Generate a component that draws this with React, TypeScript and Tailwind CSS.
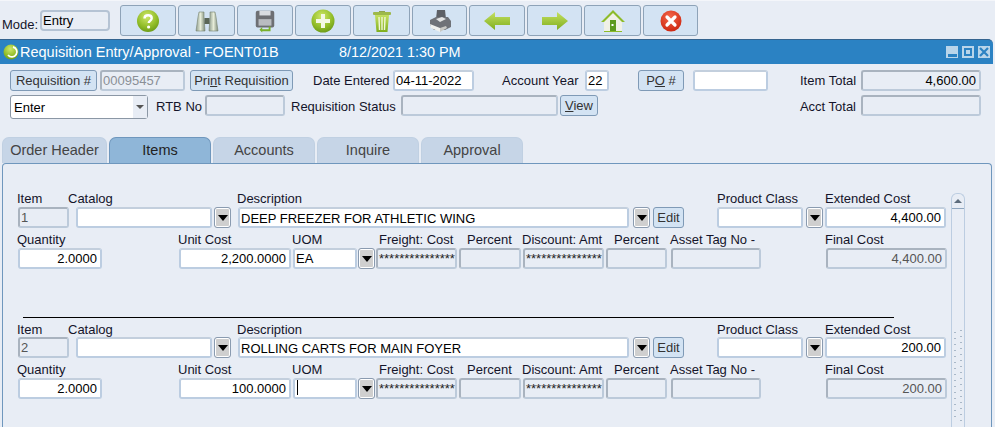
import type { ReactNode } from "react";

const well = "h-[21px] shrink-0 rounded-[3px] border-2 pl-[1px] pr-[3px] text-[13px] leading-[17px] whitespace-pre overflow-hidden";
const whiteWell = `${well} border-[#bccde1] border-t-[#c3cfdd] bg-white text-black`;
const greyWell = `${well} border-[#bccada] border-t-[#a9b3bf] border-l-[#a9b3bf] bg-[#e8edf5] text-[#555]`;

function Input({ className = "", children }: { className?: string; children?: ReactNode }) {
  return <div className={`${whiteWell} ${className}`}>{children}</div>;
}

function Display({ className = "", children }: { className?: string; children?: ReactNode }) {
  return <div className={`${greyWell} ${className}`}>{children}</div>;
}

function Lov({ className = "" }: { className?: string }) {
  return (
    <div className={`flex h-[21px] w-[17px] shrink-0 items-center justify-center rounded-[3px] border border-[#8a9bb0] bg-[#cfcfcf] shadow-[inset_0_0_0_1px_#fff] ${className}`}>
      <div className="h-0 w-0 border-x-[5px] border-t-[6px] border-x-transparent border-t-black" />
    </div>
  );
}

function Btn({ className = "", children }: { className?: string; children: ReactNode }) {
  return (
    <div className={`flex h-[21px] shrink-0 items-center justify-center whitespace-pre rounded-[3px] border border-[#7f9ab6] bg-[#d3e3f3] text-[13px] text-[#333] ${className}`}>
      {children}
    </div>
  );
}

function Label({ className = "", children }: { className?: string; children: ReactNode }) {
  return <div className={`shrink-0 text-[13px] leading-[16px] whitespace-pre text-[#14142a] ${className}`}>{children}</div>;
}

function ToolButton({ className = "", children }: { className?: string; children: ReactNode }) {
  return (
    <div className={`flex h-[31px] shrink-0 items-center justify-center rounded-[3px] border border-[#8ea3b8] bg-[#d3e3f3] ${className}`}>
      {children}
    </div>
  );
}

const IconDefs = () => (
  <svg width="0" height="0" className="absolute">
    <defs>
      <radialGradient id="green" cx="0.45" cy="0.3" r="0.8">
        <stop offset="0" stopColor="#cfe86a" />
        <stop offset="0.6" stopColor="#8fbb26" />
        <stop offset="1" stopColor="#5f8f14" />
      </radialGradient>
      <radialGradient id="red" cx="0.45" cy="0.3" r="0.8">
        <stop offset="0" stopColor="#f4674a" />
        <stop offset="1" stopColor="#c81f0a" />
      </radialGradient>
      <linearGradient id="arrow" x1="0" y1="0" x2="0" y2="1">
        <stop offset="0" stopColor="#c4e060" />
        <stop offset="1" stopColor="#7fae1e" />
      </linearGradient>
      <linearGradient id="steel" x1="0" y1="0" x2="1" y2="0">
        <stop offset="0" stopColor="#8c9a8c" />
        <stop offset="0.5" stopColor="#e6ecd8" />
        <stop offset="1" stopColor="#7d8a7a" />
      </linearGradient>
    </defs>
  </svg>
);

const HelpIcon = () => (
  <svg width="24" height="24" viewBox="0 0 24 24">
    <circle cx="12" cy="12" r="11" fill="url(#green)" />
    <path d="M8.500 9.500c0-2 1.600-3.200 3.600-3.200s3.600 1.200 3.600 3c0 2.600-3 2.600-3 4.800" fill="none" stroke="#fff" strokeWidth="2.400" />
    <circle cx="12.600" cy="18" r="1.600" fill="#fff" />
  </svg>
);

const BinocularsIcon = () => (
  <svg width="24" height="24" viewBox="0 0 24 24">
    <path d="M4 3h5v5l1 14H1L3 8z" fill="url(#steel)" stroke="#77836f" strokeWidth="0.600" />
    <path d="M15 3h5l1 5 2 14h-9l1-14z" fill="url(#steel)" stroke="#77836f" strokeWidth="0.600" />
    <rect x="9.500" y="9" width="5" height="6" fill="#5a6657" />
  </svg>
);

const SaveIcon = () => (
  <svg width="24" height="24" viewBox="0 0 26 26">
    <rect x="3" y="2" width="20" height="18" rx="2" fill="#6d6f73" />
    <rect x="7" y="2" width="12" height="5" fill="#d9dce0" />
    <rect x="6" y="11" width="14" height="7" fill="#b9bcc0" />
    <path d="M17 19v3h-7v-2.500l-3 3 3 3V24h9v-5z" fill="#79b02a" />
  </svg>
);

const PlusIcon = () => (
  <svg width="24" height="24" viewBox="0 0 24 24">
    <circle cx="12" cy="12" r="11.500" fill="url(#green)" />
    <path d="M10 5h4v5h5v4h-5v5h-4v-5H5v-4h5z" fill="#f3f8e4" />
  </svg>
);

const TrashIcon = () => (
  <svg width="20" height="24" viewBox="0 0 20 24">
    <path d="M7 2h6v2H7z" fill="#8fa34f" />
    <rect x="1" y="3" width="18" height="3" rx="1" fill="#9db84a" />
    <path d="M3 6h14l-1.500 17h-11z" fill="url(#arrow)" />
    <path d="M7 8l.5 13M10 8v13M13 8l-.5 13" stroke="#f1f6d8" strokeWidth="1.400" />
  </svg>
);

const PrinterIcon = () => (
  <svg width="24" height="24" viewBox="0 0 24 24">
    <path d="M9 1h8l1 9H8z" fill="#5d6066" />
    <path d="M2 11l6-3h12l3 4v6l-6 3H6L2 16z" fill="#6f7278" />
    <path d="M2 15l10 4v4L3 19z" fill="#f1f1ee" />
    <path d="M12 19l6-2 1 2-7 4z" fill="#c9c9c5" />
    <path d="M8 10l6-2 4 2-6 3z" fill="#e3e4e4" />
  </svg>
);

const ArrowIcon = ({ flip = false }: { flip?: boolean }) => (
  <svg width="28" height="20" viewBox="0 0 28 20" className={flip ? "-scale-x-100" : ""}>
    <path d="M1 10L12 1v5h15v8H12v5z" fill="url(#arrow)" />
  </svg>
);

const HomeIcon = () => (
  <svg width="26" height="24" viewBox="0 0 26 24">
    <path d="M13 1L1 13h3v10h18V13h3z" fill="#8dbb2a" />
    <path d="M13 4L4 13v9h18v-9z" fill="#f0f1e6" />
    <rect x="10" y="11" width="6" height="11" fill="#5d9a1e" />
    <rect x="11.500" y="15" width="2" height="2" fill="#fff" />
  </svg>
);

const CloseIcon = () => (
  <svg width="22" height="22" viewBox="0 0 22 22">
    <circle cx="11" cy="11" r="10.500" fill="url(#red)" />
    <path d="M7 7l8 8M15 7l-8 8" stroke="#fff" strokeWidth="3.200" strokeLinecap="round" />
  </svg>
);

function Toolbar() {
  return (
    <div className="flex h-[38px] items-start bg-[#e8edf5]">
      <Label className="ml-[2px] mt-[16px] w-[38px]">Mode:</Label>
      <Display className="mt-[9px] w-[70px] !rounded-[4px] !border-[#b5c3d4] !text-black">Entry</Display>
      <div className="ml-[10px] mt-[4px] flex gap-[2px]">
        <ToolButton className="w-[56px]"><HelpIcon /></ToolButton>
        <ToolButton className="w-[57px]"><BinocularsIcon /></ToolButton>
        <ToolButton className="w-[56px]"><SaveIcon /></ToolButton>
        <ToolButton className="w-[56px]"><PlusIcon /></ToolButton>
        <ToolButton className="w-[57px]"><TrashIcon /></ToolButton>
        <ToolButton className="w-[55px]"><PrinterIcon /></ToolButton>
        <ToolButton className="w-[56px]"><ArrowIcon /></ToolButton>
        <ToolButton className="w-[55px]"><ArrowIcon flip /></ToolButton>
        <ToolButton className="w-[57px]"><HomeIcon /></ToolButton>
        <ToolButton className="w-[55px]"><CloseIcon /></ToolButton>
      </div>
    </div>
  );
}

function TitleBar() {
  return (
    <div className="flex h-[25px] w-[993px] items-center rounded-tr-[5px] border-t border-[#35648f] bg-[#2b82c3] text-white">
      <svg width="18" height="18" viewBox="0 0 18 18" className="ml-[2px]">
        <circle cx="9" cy="9" r="7.500" fill="url(#green)" />
        <path d="M11 4a5 5 0 1 1-5 8" fill="none" stroke="#fff" strokeWidth="1.800" />
      </svg>
      <span className="w-[319px] text-[14.500px] leading-none">Requisition Entry/Approval - FOENT01B</span>
      <span className="text-[14.400px] leading-none">8/12/2021 1:30 PM</span>
      <div className="ml-auto mr-[3px] flex gap-[4px]">
        <div className="flex h-[12px] w-[12px] items-end justify-center bg-[#b9d5ea] pb-[1px]">
          <div className="h-[3px] w-[9px] bg-[#2b82c3]" />
        </div>
        <div className="flex h-[12px] w-[12px] items-center justify-center bg-[#b9d5ea]">
          <div className="h-[8px] w-[8px] border-2 border-[#2b82c3]" />
        </div>
        <div className="flex h-[12px] w-[12px] items-center justify-center bg-[#b9d5ea]">
          <svg width="10" height="10" viewBox="0 0 10 10">
            <path d="M1 1l8 8M9 1l-8 8" stroke="#2b82c3" strokeWidth="2.200" />
          </svg>
        </div>
      </div>
    </div>
  );
}

function HeaderForm() {
  return (
    <div className="h-[73px] pt-[6px]">
      <div className="flex items-center">
        <Btn className="ml-[10px] w-[87px]">Requisition #</Btn>
        <Display className="ml-[3px] w-[85px] !text-[#8a8f96]">00095457</Display>
        <Btn className="ml-[5px] w-[103px]"><span>Pri<u>n</u>t Requisition</span></Btn>
        <Label className="ml-[20px] w-[80px]">Date Entered</Label>
        <Input className="w-[81px]">04-11-2022</Input>
        <Label className="ml-[28px] w-[83px]">Account Year</Label>
        <Input className="w-[24px]">22</Input>
        <Btn className="ml-[29px] w-[46px]"><span>P<u>O</u> #</span></Btn>
        <Input className="ml-[9px] w-[75px]" />
        <Label className="ml-[32px] w-[56px] text-right">Item Total</Label>
        <Display className="ml-[5px] w-[120px] text-right !text-black">4,600.00</Display>
      </div>
      <div className="mt-[4px] flex items-start">
        <div className="ml-[10px] flex h-[24px] w-[138px] shrink-0 rounded-[3px] border border-[#8b97a5] bg-white">
          <div className="flex-1 pl-[3px] text-[13px] leading-[23px] text-black">Enter</div>
          <div className="flex w-[14px] items-center justify-center bg-[#e8edf5]">
            <div className="h-0 w-0 border-x-[4px] border-t-[4px] border-x-transparent border-t-[#555]" />
          </div>
        </div>
        <Label className="ml-[8px] mt-[4px] w-[49px]">RTB No</Label>
        <Display className="w-[80px]" />
        <Label className="ml-[6px] mt-[4px] w-[110px]">Requisition Status</Label>
        <Display className="w-[157px]" />
        <Btn className="ml-[2px] w-[38px]"><span><u>V</u>iew</span></Btn>
        <Label className="ml-[200px] mt-[4px] w-[58px] text-right">Acct Total</Label>
        <Display className="ml-[5px] w-[120px]" />
      </div>
    </div>
  );
}

function Tabs() {
  const tab = "flex h-[26px] w-[102px] shrink-0 items-center justify-center rounded-t-[7px] border-t border-x border-[#c0d0e2] bg-[#c6d5e7] text-[14.500px] text-[#444]";
  return (
    <div className="flex h-[26px] gap-[2px] pl-[2px]">
      <div className={`${tab} !w-[105px]`}>Order Header</div>
      <div className={`${tab} !border-[#6f97bd] !bg-[#8fb6d8] !text-[#222]`}>Items</div>
      <div className={tab}>Accounts</div>
      <div className={tab}>Inquire</div>
      <div className={tab}>Approval</div>
    </div>
  );
}

function ItemBlock({ no, desc, unit, uom, extended, topRow }: { no: string; desc: string; unit: string; uom: string; extended: string; topRow: string }) {
  return (
    <div>
      <div className={`flex ${topRow}`}>
        <Label className="ml-[14px] w-[51px]">Item</Label>
        <Label className="w-[169px]">Catalog</Label>
        <Label className="w-[480px]">Description</Label>
        <Label className="w-[108px]">Product Class</Label>
        <Label>Extended Cost</Label>
      </div>
      <div className="flex">
        <Display className="ml-[15px] w-[51px]">{no}</Display>
        <Input className="ml-[7px] w-[136px]" />
        <Lov className="ml-[2px]" />
        <Input className="ml-[7px] w-[391px] pt-[1px]">{desc}</Input>
        <Lov className="ml-[4px]" />
        <Btn className="ml-[3px] w-[31px]">Edit</Btn>
        <Input className="ml-[33px] w-[86px]" />
        <Lov className="ml-[3px]" />
        <Input className="ml-[2px] w-[121px] text-right">{extended}</Input>
      </div>
      <div className="mt-[4px] flex h-[16px] items-center">
        <Label className="ml-[14px] w-[161px]">Quantity</Label>
        <Label className="w-[114px]">Unit Cost</Label>
        <Label className="w-[87px]">UOM</Label>
        <Label className="w-[88px]">Freight: Cost</Label>
        <Label className="w-[55px]">Percent</Label>
        <Label className="w-[92px]">Discount: Amt</Label>
        <Label className="w-[56px]">Percent</Label>
        <Label className="w-[155px]">Asset Tag No -</Label>
        <Label>Final Cost</Label>
      </div>
      <div className="flex">
        <Input className="ml-[15px] w-[84px] text-right">2.0000</Input>
        <Input className="ml-[77px] w-[112px] text-right">{unit}</Input>
        <Input className="ml-[2px] w-[64px]">
          {uom === "" ? <div className="ml-[1px] h-[15px] w-[1px] bg-black" /> : uom}
        </Input>
        <Lov className="ml-[1px]" />
        <Display className="ml-[1px] w-[81px] !text-[#222]">***************</Display>
        <Display className="ml-[2px] w-[62px]" />
        <Display className="ml-[2px] w-[81px] !text-[#222]">***************</Display>
        <Display className="ml-[2px] w-[61px]" />
        <Display className="ml-[4px] w-[90px]" />
        <Display className="ml-[65px] w-[121px] text-right">{extended}</Display>
      </div>
    </div>
  );
}

function Scrollbar() {
  return (
    <div className="ml-[1px] mt-[29px] flex h-[300px] w-[14px] shrink-0 flex-col rounded-t-[6px] border-x border-t border-[#bccde1]">
      <div className="flex h-[15px] items-center justify-center border-b border-[#8fa6bf]">
        <div className="h-0 w-0 border-x-[4px] border-b-[4px] border-x-transparent border-b-[#5d6c7c]" />
      </div>
      <div className="mx-[2px] mt-[121px] flex h-[92px] flex-col gap-[3px] overflow-hidden">
        {Array.from({ length: 16 }, (_, index) => (
          <div key={index} className="flex h-[3px] justify-between">
            <div className="mt-[2px] h-[1px] w-[2px] bg-[#a9b8c8]" />
            <div className="h-[1px] w-[2px] bg-[#a9b8c8]" />
          </div>
        ))}
      </div>
    </div>
  );
}

export default function App() {
  return (
    <div className="h-[427px] w-[995px] overflow-hidden bg-[#e8edf5] font-['Liberation_Sans',Arial,sans-serif]">
      <IconDefs />
      <div className="h-[1px] bg-[#f4f6fa]" />
      <Toolbar />
      <TitleBar />
      <HeaderForm />
      <Tabs />
      <div className="ml-[2px] flex h-[300px] w-[990px] rounded-t-[4px] border border-b-0 border-[#6f97bd]">
        <div className="w-[947px] shrink-0 pt-[27px]">
          <ItemBlock no="1" desc="DEEP FREEZER FOR ATHLETIC WING" unit="2,200.0000" uom="EA" extended="4,400.00" topRow="h-[16px]" />
          <div className="ml-[20px] mt-[48px] h-[1px] w-[871px] bg-black" />
          <div className="mt-[4px]">
            <ItemBlock no="2" desc="ROLLING CARTS FOR MAIN FOYER" unit="100.0000" uom="" extended="200.00" topRow="mt-[1px] h-[15px]" />
          </div>
        </div>
        <Scrollbar />
      </div>
    </div>
  );
}
